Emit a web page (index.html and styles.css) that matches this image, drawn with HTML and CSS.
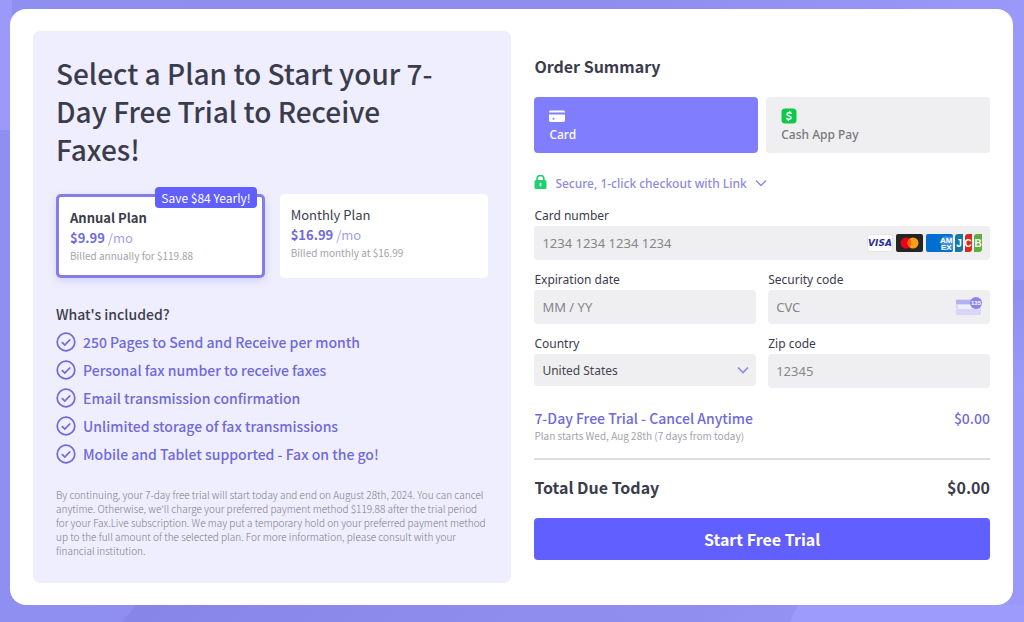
FILE: index.html
```html
<!DOCTYPE html>
<html lang="en">
<head>
    <meta charset="UTF-8">
    <meta name="viewport" content="width=device-width, initial-scale=1.0">
    <title>Start your Free Trial</title>
    <link rel="stylesheet" href="styles.css">
</head>
<body>
    <svg class="sprite" aria-hidden="true">
        <symbol id="check" viewBox="0 0 20 20">
            <circle cx="10" cy="10" r="8.8" fill="none" stroke="currentColor" stroke-width="1.7"/>
            <path d="M5.8 10.2l3 2.9 5.4-5.6" fill="none" stroke="currentColor" stroke-width="1.8"/>
        </symbol>
    </svg>
    <main class="checkout">
        <section class="plan-panel">
            <h1>Select a Plan to Start your 7-Day Free Trial to Receive Faxes!</h1>
            <div class="plans">
                <label class="plan selected">
                    <input type="radio" name="plan" value="annual" checked>
                    <span class="badge">Save $84 Yearly!</span>
                    <span class="plan-name">Annual Plan</span>
                    <span class="price"><b>$9.99</b> /mo</span>
                    <span class="billing">Billed annually for $119.88</span>
                </label>
                <label class="plan">
                    <input type="radio" name="plan" value="monthly">
                    <span class="plan-name">Monthly Plan</span>
                    <span class="price"><b>$16.99</b> /mo</span>
                    <span class="billing">Billed monthly at $16.99</span>
                </label>
            </div>
            <h2>What's included?</h2>
            <ul class="features">
                <li><svg><use href="#check"/></svg>250 Pages to Send and Receive per month</li>
                <li><svg><use href="#check"/></svg>Personal fax number to receive faxes</li>
                <li><svg><use href="#check"/></svg>Email transmission confirmation</li>
                <li><svg><use href="#check"/></svg>Unlimited storage of fax transmissions</li>
                <li><svg><use href="#check"/></svg>Mobile and Tablet supported - Fax on the go!</li>
            </ul>
            <p class="fine-print">By continuing, your 7-day free trial will start today and end on August 28th, 2024. You can cancel anytime. Otherwise, we'll charge your preferred payment method $119.88 after the trial period for your Fax.Live subscription. We may put a temporary hold on your preferred payment method up to the full amount of the selected plan. For more information, please consult with your financial institution.</p>
        </section>

        <form class="order">
            <h2 class="order-title">Order Summary</h2>
            <div class="methods">
                <button type="button" class="method active">
                    <svg viewBox="0 0 16 16" width="16" height="16">
                        <path d="M0 4.6V4a1.5 1.5 0 0 1 1.500-1.500h13A1.500 1.500 0 0 1 16 4v.6z" fill="#fff"/>
                        <path d="M0 6.600h16v6A1.500 1.500 0 0 1 14.500 14h-13A1.500 1.500 0 0 1 0 12.600z" fill="#fff"/>
                        <circle cx="4.500" cy="10.800" r="1" fill="#807dff"/>
                    </svg>
                    <span>Card</span>
                </button>
                <button type="button" class="method">
                    <svg viewBox="0 0 16 16" width="16" height="16">
                        <rect x=".5" y=".5" width="15" height="15" rx="3.500" fill="#0fc94b"/>
                        <path d="M10.700 5.700C9.500 4.600 6.300 4.200 6 6.100c-.2 2.200 4.400 1.400 4.100 3.700-.3 2-3.500 1.700-4.900.3M9 3l-.5 1.700M7.600 11.200L7.100 13" fill="none" stroke="#fff" stroke-width="1.500"/>
                    </svg>
                    <span>Cash App Pay</span>
                </button>
            </div>
            <button type="button" class="link-toggle">
                <svg viewBox="0 0 13 16" width="13" height="16">
                    <path d="M3.200 7V3.600a3.300 3.300 0 0 1 6.600 0V7" fill="none" stroke="#1fd071" stroke-width="1.700"/>
                    <rect x=".5" y="5" width="12" height="9" rx="1.500" fill="#1fd071"/>
                    <path d="M6.500 7.800v3.400" stroke="#fff" stroke-width="1.600"/>
                </svg>
                <span>Secure, 1-click checkout with Link</span>
                <svg viewBox="0 0 12 12" width="12" height="12">
                    <path d="M1 3.500l5 5 5-5" fill="none" stroke="currentColor" stroke-width="1.500"/>
                </svg>
            </button>

            <div class="fields">
                <div class="field wide">
                    <label for="cardNumber">Card number</label>
                    <div class="control">
                        <input type="text" id="cardNumber" placeholder="1234 1234 1234 1234">
                        <svg class="brands" viewBox="0 0 116 18" width="116" height="18">
                            <rect x=".5" y=".5" width="25" height="17" rx="2" fill="#fff" stroke="#e3e3e8"/>
                            <text x="13" y="12" text-anchor="middle" class="visa">VISA</text>
                            <rect x="29" width="27" height="18" rx="2" fill="#252525"/>
                            <circle cx="39" cy="9" r="5.500" fill="#eb001b"/>
                            <circle cx="46" cy="9" r="5.500" fill="#f79e1b"/>
                            <path d="M42.500 4.800a5.500 5.500 0 0 1 0 8.400 5.500 5.500 0 0 1 0-8.400z" fill="#ff5f00"/>
                            <rect x="59" width="27" height="18" rx="2" fill="#016fd0"/>
                            <path d="M76 2.500h10v13H74V9h-2z" fill="#fff" opacity=".25"/>
                            <text x="73" y="9" class="amex">AM</text>
                            <text x="74" y="16" class="amex">EX</text>
                            <path d="M88 18V3a3 3 0 0 1 3-3h5v15a3 3 0 0 1-3 3z" fill="#1178a8"/>
                            <path d="M98 18V3a3 3 0 0 1 3-3h4v15a3 3 0 0 1-3 3z" fill="#d9291c"/>
                            <path d="M107 18V3a3 3 0 0 1 3-3h5v15a3 3 0 0 1-3 3z" fill="#5eae3c"/>
                            <text x="92" y="13" text-anchor="middle" class="jcb">J</text>
                            <text x="101" y="13" text-anchor="middle" class="jcb">C</text>
                            <text x="111" y="13" text-anchor="middle" class="jcb">B</text>
                        </svg>
                    </div>
                </div>
                <div class="field">
                    <label for="expiry">Expiration date</label>
                    <div class="control"><input type="text" id="expiry" placeholder="MM / YY"></div>
                </div>
                <div class="field">
                    <label for="cvc">Security code</label>
                    <div class="control">
                        <input type="text" id="cvc" placeholder="CVC">
                        <svg class="brands" viewBox="0 0 27 20" width="27" height="20">
                            <rect y="2" width="25" height="16" rx="1.500" fill="#d9d6f7"/>
                            <rect y="3" width="25" height="4" fill="#b5b0f0"/>
                            <rect x="2" y="8" width="20" height="4" fill="#efeefc"/>
                            <circle cx="20" cy="6" r="6" fill="#8a84e8"/>
                            <text x="20" y="8" text-anchor="middle" class="digits">135</text>
                        </svg>
                    </div>
                </div>
                <div class="field">
                    <label for="country">Country</label>
                    <div class="control short">
                        <select id="country"><option>United States</option></select>
                        <svg class="chevron" viewBox="0 0 12 12" width="12" height="12">
                            <path d="M1 3.500l5 5 5-5" fill="none" stroke="currentColor" stroke-width="1.700"/>
                        </svg>
                    </div>
                </div>
                <div class="field">
                    <label for="zip">Zip code</label>
                    <div class="control"><input type="text" id="zip" placeholder="12345"></div>
                </div>
            </div>

            <div class="row trial"><span>7-Day Free Trial - Cancel Anytime</span><span>$0.00</span></div>
            <p class="starts">Plan starts Wed, Aug 28th (7 days from today)</p>
            <div class="row total"><span>Total Due Today</span><span>$0.00</span></div>
            <button type="submit" class="submit-btn">Start Free Trial</button>
        </form>
    </main>
</body>
</html>
```
FILE: styles.css
```css
:root {
    --primary: #615fff;
    --primary-soft: #807dff;
    --purple-text: #6f69dc;
    --purple-light: #908ae0;
    --field-bg: #efeff1;
    --panel-bg: #efeeff;
    --text-dark: #3b3c4b;
    --text-muted: #a3a3ad;
}
* {
    box-sizing: border-box;
}
body {
    margin: 0;
    padding: 9px 11px 17px 10px;
    min-height: 100vh;
    font-family: "Noto Sans CJK SC", "Noto Sans", sans-serif;
    color: var(--text-dark);
    background:
        linear-gradient(#9b9afb, #9b9afb) 0 0 / 12px 130px no-repeat,
        linear-gradient(#8f8dee, #9b99f9) 100% 280px / 12px 110px no-repeat,
        linear-gradient(115deg, transparent 12px, #9d9bfb 13px) 100% 100% / 240px 17px no-repeat,
        linear-gradient(130deg, transparent 12px, #8785e8 13px, #8f8eee 320px, transparent) 120px 100% / 640px 17px no-repeat,
        linear-gradient(90deg, #8f8ef1, #8f8eee 60%, #9a98f9);
}
h1, h2, p, ul {
    margin: 0;
    padding: 0;
}
button, input, select {
    font: inherit;
    border: none;
}
.sprite {
    display: none;
}
.checkout {
    display: grid;
    grid-template-columns: 105fr 100fr;
    gap: 23px;
    padding: 22px 23px;
    background: #fff;
    border-radius: 16px;
}

/* left side */
.plan-panel {
    padding: 23px 23px 25px;
    background: var(--panel-bg);
    border-radius: 7px;
}
h1 {
    padding-right: 24px;
    font-size: 28px;
    line-height: 38px;
    font-weight: 500;
}
.plans {
    display: grid;
    grid-template-columns: 1fr 1fr;
    gap: 15px;
    margin-top: 26px;
}
.plan {
    position: relative;
    display: flex;
    flex-direction: column;
    height: 84px;
    padding: 11px;
    background: #fff;
    border-radius: 5px;
    cursor: pointer;
}
.plan.selected {
    border: 3px solid #847de6;
    box-shadow: 0 3px 8px rgba(97, 95, 255, 0.2);
}
.plan input {
    position: absolute;
    opacity: 0;
}
.badge {
    position: absolute;
    top: -10px;
    right: 5px;
    padding: 0 6px;
    border-radius: 4px;
    background: var(--primary);
    color: #fff;
    font-size: 12px;
    line-height: 21px;
}
.plan-name {
    font-size: 13px;
    line-height: 20px;
}
.selected .plan-name {
    font-weight: 600;
}
.price {
    font-size: 13px;
    line-height: 20px;
    color: #a5a0ea;
}
.price b {
    font-weight: 600;
    color: var(--purple-text);
}
.billing {
    font-size: 10px;
    line-height: 15px;
    color: var(--text-muted);
}
.plan-panel h2 {
    margin-top: 26px;
    font-size: 14px;
    line-height: 20px;
    font-weight: 500;
}
.features {
    margin-top: 4px;
    list-style: none;
}
.features li {
    display: flex;
    align-items: center;
    gap: 7px;
    height: 28px;
    color: var(--purple-text);
    font-size: 14px;
    font-weight: 500;
}
.features svg {
    width: 20px;
    height: 20px;
}
.fine-print {
    margin-top: 20px;
    font-size: 10px;
    font-weight: 300;
    line-height: 14px;
    color: #7c7c86;
}

/* right side */
.order {
    padding-top: 23px;
}
.order-title {
    font-size: 16px;
    line-height: 24px;
    font-weight: 600;
}
.methods {
    display: grid;
    grid-template-columns: 1fr 1fr;
    gap: 8px;
    margin-top: 19px;
}
.method {
    display: flex;
    flex-direction: column;
    align-items: flex-start;
    justify-content: center;
    gap: 2px;
    height: 56px;
    padding: 2px 15px 0;
    border-radius: 4px;
    background: var(--field-bg);
    color: #77777b;
    font-family: "Noto Sans", sans-serif;
    font-size: 12px;
    line-height: 18px;
    font-weight: 500;
}
.method.active {
    background: var(--primary-soft);
    color: #fff;
}
.link-toggle {
    display: flex;
    align-items: center;
    gap: 8px;
    height: 20px;
    margin-top: 20px;
    padding: 0;
    background: none;
    color: var(--purple-light);
    font-family: "Noto Sans", sans-serif;
    font-size: 12px;
    font-weight: 500;
}
.fields {
    display: grid;
    grid-template-columns: 1fr 1fr;
    gap: 12px;
    margin-top: 15px;
    font-family: "Noto Sans", sans-serif;
    font-size: 12px;
}
.field {
    min-width: 0;
}
.wide {
    grid-column: 1 / 3;
}
.field label {
    display: block;
    height: 18px;
    line-height: 16px;
}
.control {
    display: flex;
    align-items: center;
    height: 34px;
    padding: 0 7px 0 8px;
    border-radius: 4px;
    background: var(--field-bg);
}
.control.short {
    height: 32px;
}
.control input,
.control select {
    flex: 1;
    min-width: 0;
    padding: 0;
    background: none;
    color: #45454d;
    outline: none;
    appearance: none;
}
.control input {
    font-size: 13px;
}
.control input::placeholder {
    color: #86868a;
    opacity: 1;
}
.brands {
    flex: none;
}
.chevron {
    color: var(--purple-light);
}
.visa {
    font: italic bold 9px "DejaVu Sans", sans-serif;
    fill: #2a2f9b;
}
.amex {
    font: bold 8px "Liberation Sans", sans-serif;
    fill: #fff;
}
.jcb {
    font: bold 10px "Liberation Sans", sans-serif;
    fill: #fff;
}
.digits {
    font: bold 6px "Liberation Sans", sans-serif;
    fill: #fff;
}
.row {
    display: flex;
    justify-content: space-between;
    font-weight: 600;
}
.trial {
    margin-top: 20px;
    color: var(--purple-text);
    font-size: 14px;
    line-height: 20px;
    font-weight: 500;
}
.starts {
    padding-bottom: 15px;
    border-bottom: 2px solid #dcdce1;
    color: var(--text-muted);
    font-size: 10px;
    line-height: 15px;
}
.total {
    margin-top: 15px;
    font-size: 16px;
    line-height: 24px;
}
.submit-btn {
    width: 100%;
    height: 42px;
    margin-top: 19px;
    border-radius: 4px;
    background: var(--primary);
    color: #fff;
    font-size: 16px;
    font-weight: 600;
    cursor: pointer;
}
```
